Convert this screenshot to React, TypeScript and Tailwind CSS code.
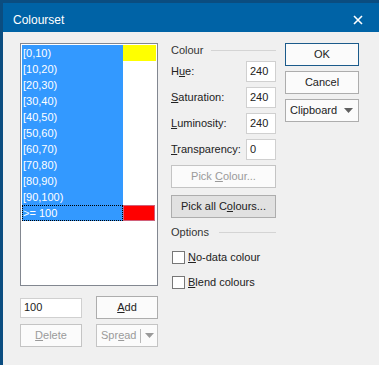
import React from "react";

const ui = { fontFamily: '"Liberation Sans", Arial, sans-serif' };

const rows = [
	"[0,10)",
	"[10,20)",
	"[20,30)",
	"[30,40)",
	"[40,50)",
	"[50,60)",
	"[60,70)",
	"[70,80)",
	"[80,90)",
	"[90,100)",
	">= 100",
];

const Btn = ({
	children,
	className = "",
	disabled = false,
	focused = false,
}: {
	children: React.ReactNode;
	className?: string;
	disabled?: boolean;
	focused?: boolean;
}) => (
	<div
		className={
			"flex items-center justify-center h-[23px] border text-[11px] " +
			(disabled
				? "border-[#c4c4c4] bg-[#fbfbfb] text-[#9a9a9a] "
				: focused
					? "border-[#1b5b8b] bg-[#fbfbfb] text-[#222] "
					: "border-[#adadad] bg-[#fbfbfb] text-[#222] ") +
			className
		}
	>
		{children}
	</div>
);

const Field = ({ label, value }: { label: React.ReactNode; value: string }) => (
	<div className="flex items-center h-[21px]">
		<span className="flex-1 text-[11px] text-[#222]">{label}</span>
		<div className="w-[30px] h-[21px] bg-white border border-[#d0d0d0] text-[11px] text-[#222] pl-[3px] flex items-center">
			{value}
		</div>
	</div>
);

const Group = ({ title, lineLeft }: { title: string; lineLeft: string }) => (
	<div className="flex items-center h-[14px] text-[11px] text-[#333]">
		<span>{title}</span>
		<div className={"flex-1 h-px bg-[#d4d4d4] " + lineLeft} />
	</div>
);

const Check = ({ label }: { label: React.ReactNode }) => (
	<div className="flex items-center h-[15px] text-[11px] text-[#222]">
		<div className="w-[13px] h-[13px] border border-[#777] bg-white ml-[1px] mr-[3px]" />
		<span>{label}</span>
	</div>
);

const Arrow = ({ color }: { color: string }) => (
	<svg width="9" height="5" viewBox="0 0 9 5">
		<path d="M0 0 L9 0 L4.5 5 Z" fill={color} />
	</svg>
);

export default function App() {
	return (
		<div
			style={ui}
			className="w-[379px] h-[365px] flex flex-col bg-[#f0f0f0] border-l-[3px] border-t-[3px] border-[#0b4d80] overflow-hidden"
		>
			{/* title bar */}
			<div className="h-[29px] bg-[#0063a6] flex items-center pl-[10px] pr-[16px] pt-[4px] text-white">
				<span className="text-[12px] flex-1">Colourset</span>
				<svg width="10" height="10" viewBox="0 0 10 10">
					<path d="M1 1 L9 9 M9 1 L1 9" stroke="white" strokeWidth="1.6" />
				</svg>
			</div>

			<div className="flex pl-[17px] pt-[11px]">
				{/* left: list and its buttons */}
				<div className="w-[138px] flex flex-col">
					<div className="h-[243px] border border-[#828790] bg-white pt-px pl-px">
						{rows.map((r, i) => (
							<div key={r} className="flex h-[16px]">
								<div
									className={
										"w-[101px] bg-[#3399ff] text-white text-[11px] leading-[16px] pl-px " +
										(i === rows.length - 1 ? "outline outline-1 outline-dotted outline-black -outline-offset-1" : "")
									}
								>
									{r}
								</div>
								{i === 0 && <div className="w-[33px] bg-[#ffff00]" />}
								{i === rows.length - 1 && (
									<div className="w-[32px] bg-[#ff0000] border border-[#d0607a]" />
								)}
							</div>
						))}
					</div>
					<div className="flex justify-between items-center mt-[10px]">
						<div className="w-[62px] h-[20px] bg-white border border-[#d0d0d0] text-[11px] text-[#222] pl-[3px] flex items-center">
							100
						</div>
						<Btn className="w-[62px]">
							<span>
								<u>A</u>dd
							</span>
						</Btn>
					</div>
					<div className="flex justify-between mt-[5px]">
						<Btn disabled className="w-[62px] h-[22px]">
							<span>
								<u>D</u>elete
							</span>
						</Btn>
						<Btn disabled className="w-[62px] h-[22px] !justify-start pl-[4px]">
							<span>
								Spr<u>e</u>ad
							</span>
							<div className="w-px h-[14px] bg-[#b8b8b8] ml-[3px] mr-[4px]" />
							<Arrow color="#9a9a9a" />
						</Btn>
					</div>
				</div>

				{/* middle: colour values */}
				<div className="w-[105px] ml-[13px] flex flex-col">
					<Group title="Colour" lineLeft="ml-[8px]" />
					<div className="flex flex-col gap-[5px] mt-[4px]">
						<Field
							label={
								<>
									H<u>u</u>e:
								</>
							}
							value="240"
						/>
						<Field
							label={
								<>
									<u>S</u>aturation:
								</>
							}
							value="240"
						/>
						<Field
							label={
								<>
									<u>L</u>uminosity:
								</>
							}
							value="240"
						/>
						<Field
							label={
								<>
									<u>T</u>ransparency:
								</>
							}
							value="0"
						/>
					</div>
					<Btn disabled className="mt-[5px] h-[23px]">
						<span>
							Pick <u>C</u>olour...
						</span>
					</Btn>
					<div className="mt-[7px] h-[23px] flex items-center justify-center border border-[#adadad] bg-[#e1e1e1] text-[11px] text-[#222]">
						<span>
							Pick all C<u>o</u>lours...
						</span>
					</div>
					<div className="mt-[7px]">
						<Group title="Options" lineLeft="ml-[10px]" />
					</div>
					<div className="mt-[11px]">
						<Check
							label={
								<>
									<u>N</u>o-data colour
								</>
							}
						/>
					</div>
					<div className="mt-[10px]">
						<Check
							label={
								<>
									<u>B</u>lend colours
								</>
							}
						/>
					</div>
				</div>

				{/* right: dialog buttons */}
				<div className="w-[74px] ml-[9px] flex flex-col gap-[5px]">
					<Btn focused>OK</Btn>
					<Btn>Cancel</Btn>
					<Btn className="!justify-start pl-[4px]">
						<span className="flex-1">Clipboard</span>
						<span className="mr-[5px] flex">
							<Arrow color="#606060" />
						</span>
					</Btn>
				</div>
			</div>
		</div>
	);
}
